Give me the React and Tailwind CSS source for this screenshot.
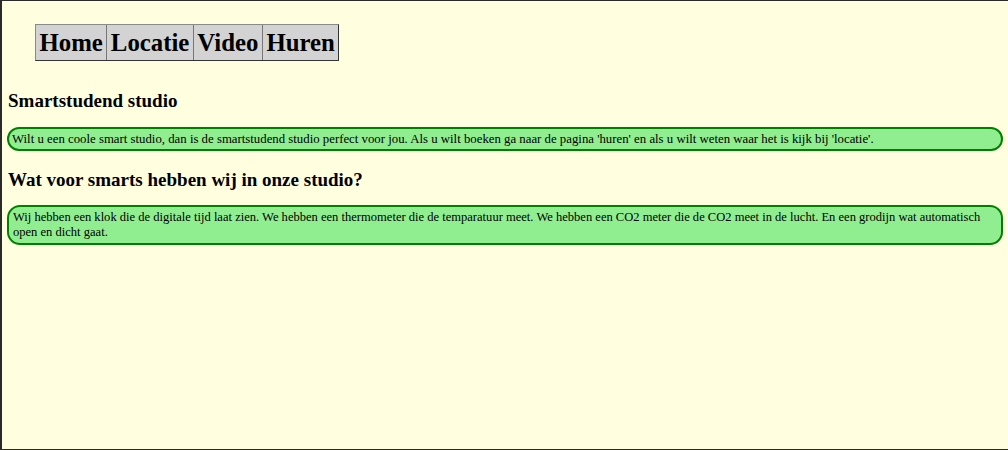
export default function App() {
  const serif = { fontFamily: '"Liberation Serif", "Times New Roman", serif' };
  const items = ["Home", "Locatie", "Video", "Huren"];
  return (
    <div
      className="h-[450px] w-[1008px] overflow-hidden border-t border-l-2 border-b border-[#2a2a2a] bg-[#ffffe0] px-[5px] text-black"
      style={serif}
    >
      <div className="ml-[28px] mt-[23px] inline-flex border-t border-l border-t-[#8a8a8a] border-l-[#8a8a8a] border-b border-r border-b-[#333] border-r-[#333] bg-[#d3d3d3]">
        {items.map((t, i) => (
          <div
            key={t}
            className={
              "px-[3.5px] py-[3px] text-[24.8px] font-bold leading-[29px] " +
              (i > 0 ? "border-l border-[#777]" : "")
            }
          >
            {t}
          </div>
        ))}
      </div>
      <h2 className="mt-[29px] pl-[1px] text-[19px] font-bold leading-[22px]">
        Smartstudend studio
      </h2>
      <p className="mt-[15px] rounded-[13px] border-2 border-[#008000] bg-[#90ee90] pl-[3px] pr-[2px] py-[2.5px] text-[12.8px] leading-[15px]">
        Wilt u een coole smart studio, dan is de smartstudend studio perfect voor jou. Als u wilt boeken ga naar de pagina 'huren' en als u wilt weten waar het is kijk bij 'locatie'.
      </p>
      <h2 className="mt-[18px] pl-[1px] text-[19px] font-bold leading-[22px]">
        Wat voor smarts hebben wij in onze studio?
      </h2>
      <p className="mt-[14px] rounded-[13px] border-2 border-[#008000] bg-[#90ee90] pl-[4px] pr-[2px] py-[3px] text-[12.55px] leading-[15px]">
        Wij hebben een klok die de digitale tijd laat zien. We hebben een thermometer die de temparatuur meet. We hebben een CO2 meter die de CO2 meet in de lucht. En een grodijn wat automatisch open en dicht gaat.
      </p>
    </div>
  );
}
